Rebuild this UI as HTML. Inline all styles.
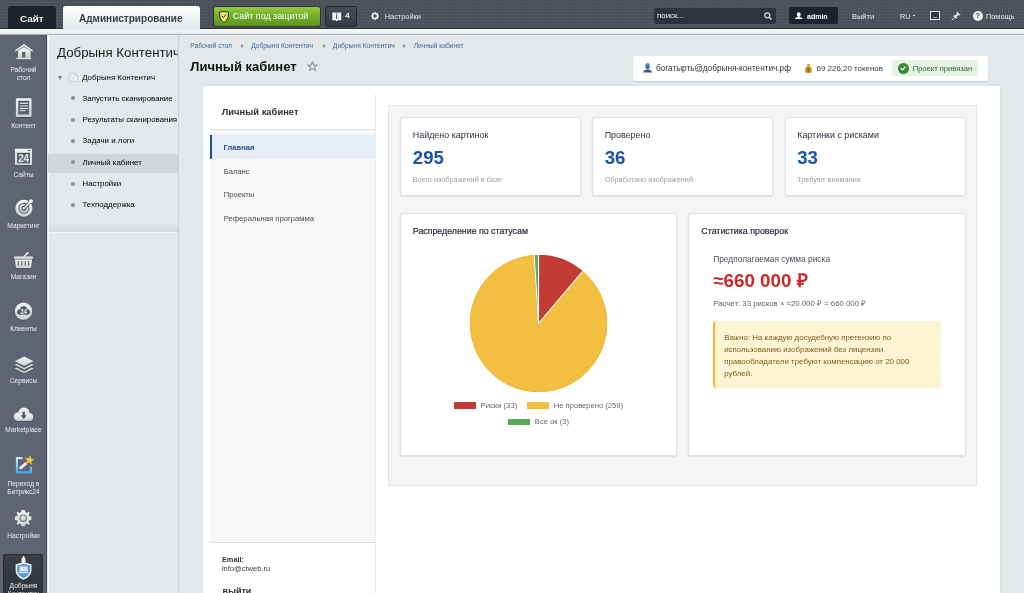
<!DOCTYPE html>
<html><head><meta charset="utf-8">
<style>
*{margin:0;padding:0;box-sizing:border-box}
html,body{width:1024px;height:593px;overflow:hidden}
body{position:relative;font-family:"Liberation Sans",sans-serif;background:#e3e9eb;color:#333}
.a{position:absolute;white-space:nowrap;line-height:1}
.b{font-weight:bold}
#topbar{position:absolute;left:0;top:0;width:1024px;height:29px;background:#4a4e57;
 background-image:linear-gradient(90deg,rgba(255,255,255,.03) 1px,transparent 1px),linear-gradient(0deg,rgba(255,255,255,.03) 1px,transparent 1px);background-size:3px 3px;border-bottom:1px solid #2f3238}
#strip{position:absolute;left:0;top:29px;width:1024px;height:6px;background:linear-gradient(#fbfcfc,#e3e7e9);border-bottom:1px solid #aeb2b5}
#side{position:absolute;left:0;top:35px;width:47px;height:558px;background:#5e6472;border-right:1px solid #474b55}
#col2{position:absolute;left:48px;top:35px;width:131px;height:558px;background:#e4e9eb;border-left:1.5px solid #f7f9fa;border-right:1px solid #cdd3d7}
.sl{color:#e9ebee;font-size:6.66px;text-align:center;width:47px;left:0;line-height:8.6px}
.mi{font-size:7.89px;color:#000;left:82.5px}
.bul{position:absolute;left:71px;width:4px;height:4px;background:#8a919b;border-radius:50%}
</style></head><body><div id="wrap" style="position:absolute;left:0;top:0;width:1024px;height:593px;will-change:transform">
<div id="topbar"></div>
<div id="strip"></div>

<!-- top tabs -->
<div class="a" style="left:8px;top:6px;width:48px;height:23px;background:#1f222b;border-radius:3px 3px 0 0"></div>
<div class="a b" style="left:20px;top:13.5px;font-size:9.9px;color:#f2f2f2">Сайт</div>
<div class="a" style="left:62.5px;top:6px;width:137px;height:24px;background:linear-gradient(#fcfcfd,#e4e8ea);border-radius:3px 3px 0 0"></div>
<div class="a b" style="left:79px;top:14.3px;font-size:10px;color:#3b3e44">Администрирование</div>

<!-- green button -->
<div class="a" style="left:214px;top:7px;width:106px;height:19px;background:linear-gradient(#95c93f,#74ad2c 50%,#5b951f);border-radius:2px;box-shadow:0 0 0 1px #2f3440"></div>
<svg class="a" style="left:219px;top:10.5px" width="10" height="12" viewBox="0 0 10 12"><defs><linearGradient id="shg" x1="0" y1="0" x2="0" y2="1"><stop offset="0" stop-color="#e9f27a"/><stop offset="1" stop-color="#f3f65a"/></linearGradient></defs><path d="M0.5 1.2 Q5 -0.2 9.5 1.2 L9.2 6 Q8.8 9 5 11.5 Q1.2 9 0.8 6Z" fill="url(#shg)" stroke="#15170f" stroke-width="0.9" stroke-linejoin="round"/><path d="M2.6 4.9 L4.3 6.4 L7.1 3.6" stroke="#1a1c12" stroke-width="1" fill="none"/></svg>
<div class="a" style="left:232.8px;top:12.1px;font-size:8.92px;color:#fff">Сайт под защитой</div>

<!-- notif -->
<div class="a" style="left:325.5px;top:6.5px;width:30.7px;height:19px;background:linear-gradient(#474c59,#363a45);border-radius:2px;box-shadow:0 0 0 1px #24272e"></div>
<svg class="a" style="left:331.5px;top:11.5px" width="10" height="10" viewBox="0 0 10 10"><path d="M0.3 0.5 H9.2 V8.3 H5.6 L4.7 9.5 L3.8 8.3 H0.3Z" fill="#f2f3f4"/><rect x="4.2" y="2.6" width="1" height="4.4" fill="#3a3e48"/><rect x="4.2" y="1.2" width="1" height="0.9" fill="#3a3e48"/></svg>
<div class="a b" style="left:345.2px;top:12.2px;font-size:7.8px;color:#fff">4</div>

<!-- settings -->
<svg class="a" style="left:370.9px;top:12.1px" width="8" height="8" viewBox="0 0 10 10"><g fill="#eee"><circle cx="5" cy="5" r="3.9"/><rect x="4.1" y="0" width="1.8" height="10"/><rect x="0" y="4.1" width="10" height="1.8"/><rect x="4.1" y="0" width="1.8" height="10" transform="rotate(45 5 5)"/><rect x="4.1" y="0" width="1.8" height="10" transform="rotate(-45 5 5)"/></g><circle cx="5" cy="5" r="2.1" fill="#4a4e57"/></svg>
<div class="a" style="left:384.7px;top:13px;font-size:7.4px;color:#e6e8ea">Настройки</div>

<!-- search -->
<div class="a" style="left:654px;top:8px;width:122px;height:15.5px;background:#2f323a;border-radius:2px;box-shadow:0 1px 0 rgba(255,255,255,.08)"></div>
<div class="a" style="left:657px;top:12.1px;font-size:7.9px;color:#f0f0f0">поиск...</div>
<svg class="a" style="left:764px;top:11.5px" width="8" height="8" viewBox="0 0 8 8"><circle cx="3.3" cy="3.3" r="2.5" stroke="#ddd" stroke-width="1.2" fill="none"/><path d="M5.2 5.2 L7.5 7.5" stroke="#ddd" stroke-width="1.4"/></svg>

<!-- admin -->
<div class="a" style="left:788.5px;top:7px;width:49.5px;height:17px;background:#1f222b;border-radius:2px"></div>
<svg class="a" style="left:795px;top:11.5px" width="7.5" height="7.5" viewBox="0 0 8 8"><path d="M4 0.3 C5.3 0.3 6 1.2 6 2.6 C6 3.8 5.4 4.6 4.8 4.9 V5.3 C6.5 5.6 7.8 6.2 7.8 7 V8 H0.2 V7 C0.2 6.2 1.5 5.6 3.2 5.3 V4.9 C2.6 4.6 2 3.8 2 2.6 C2 1.2 2.7 0.3 4 0.3Z" fill="#fff"/></svg>
<div class="a b" style="left:807px;top:12.8px;font-size:7.03px;color:#fff">admin</div>
<div class="a" style="left:852px;top:13.2px;font-size:7.46px;color:#e6e8ea">Выйти</div>
<div class="a" style="left:900px;top:12.6px;font-size:7.27px;color:#e6e8ea">RU</div>
<div class="a" style="left:912.5px;top:15px;width:2.5px;height:1px;background:#ddd"></div>
<div class="a" style="left:930px;top:11px;width:9.5px;height:9px;border:1.3px solid #e5e5e5;background:#353840"></div>
<div class="a" style="left:932.5px;top:16.5px;width:4.5px;height:1px;background:#999"></div>
<svg class="a" style="left:951px;top:11px" width="10" height="10" viewBox="0 0 10 10"><path d="M6 0.5 L9.5 4 L8.5 4.5 L7.5 4 L5.5 6 L5.8 7.5 L5 8 L2 5 L2.5 4.2 L4 4.5 L6 2.5 L5.5 1.5Z" fill="#e5e5e5"/><path d="M3.2 6.8 L0.8 9.2" stroke="#e5e5e5" stroke-width="1"/></svg>
<div class="a" style="left:972.6px;top:10.6px;width:10.6px;height:10.6px;border-radius:50%;background:#eee"></div>
<div class="a b" style="left:975.3px;top:12.2px;font-size:8px;color:#4a4e57">?</div>
<div class="a" style="left:986px;top:12.8px;font-size:7.35px;color:#e6e8ea">Помощь</div>

<!-- left sidebar -->
<div id="side"></div>
<div id="col2"></div>

<div class="a" style="left:3px;top:554px;width:40px;height:39px;background:linear-gradient(#3b3f48,#30333a);border-radius:2px;box-shadow:inset 0 0 0 1px #2a2d33"></div>
<svg class="a" style="left:0;top:0" width="47" height="593" viewBox="0 0 47 593">
<defs>
<filter id="sh" x="-30%" y="-30%" width="160%" height="160%"><feDropShadow dx="0" dy="0.4" stdDeviation="0.6" flood-color="#000" flood-opacity="0.55"/></filter>
<linearGradient id="ig" x1="0" y1="0" x2="0" y2="1"><stop offset="0" stop-color="#f4f5f6"/><stop offset="1" stop-color="#cfd1d4"/></linearGradient>
<linearGradient id="bl" x1="0" y1="0" x2="0" y2="1"><stop offset="0" stop-color="#d4f3ff"/><stop offset="1" stop-color="#3fa9ee"/></linearGradient>
</defs>
<g filter="url(#sh)" fill="url(#ig)">
 <!-- house -->
 <path d="M15.3 50 L24 44 L32.7 50 L32.7 51.9 L24 46.1 L15.3 51.9Z"/>
 <path d="M18 50.6 L24 46.9 L30.6 50.6 V57.8 H25.3 V52 H22 V57.8 H18Z"/>
 <rect x="16.5" y="57.7" width="14.6" height="1.5"/>
 <!-- document -->
 <path fill-rule="evenodd" d="M17.2 98.2 H30.2 Q31.5 98.2 31.5 99.5 V115.7 Q31.5 117 30.2 117 H17.2 Q15.9 117 15.9 115.7 V99.5 Q15.9 98.2 17.2 98.2Z M18.2 100.8 V114.6 H29.2 V100.8Z"/>
 <rect x="19.9" y="102.8" width="8.1" height="1.2"/>
 <rect x="19.9" y="105.2" width="8.1" height="1.2" opacity="0.75"/>
 <rect x="19.9" y="107.9" width="8.1" height="1.2"/>
 <rect x="19.9" y="110.1" width="5.5" height="1.2" opacity="0.8"/>
 <!-- sites window -->
 <path fill-rule="evenodd" d="M15 148.8 H32 V165 H15Z M17 152.8 V163.3 H30 V152.8Z"/>
 <!-- target -->
 <path fill-rule="evenodd" d="M23.9 199.8 A8.5 8.5 0 1 0 23.9 216.8 A8.5 8.5 0 1 0 23.9 199.8Z M23.9 202.8 A5.5 5.5 0 1 1 23.9 213.8 A5.5 5.5 0 1 1 23.9 202.8Z"/>
 <path fill-rule="evenodd" d="M23.9 203.9 A4.4 4.4 0 1 0 23.9 212.7 A4.4 4.4 0 1 0 23.9 203.9Z M23.9 205.6 A2.7 2.7 0 1 1 23.9 211 A2.7 2.7 0 1 1 23.9 205.6Z"/>
 <circle cx="23.9" cy="208.3" r="1.4"/>
</g>
<path d="M24.6 207.6 L32.5 199.7" stroke="#5e6472" stroke-width="3.2"/>
<g filter="url(#sh)" fill="url(#ig)">
 <path d="M23.5 208 L24.5 209 L30.2 203.3 L32.2 203 L33 200.5 L31.8 199.3 L29.3 200.1 L29 202.1Z"/>
 <!-- basket -->
 <rect x="13.9" y="256.4" width="19.2" height="2.3" rx="1"/>
 <path d="M22.6 256.8 L27.8 251.8 L29 252.9 L24.6 257Z"/>
 <path fill-rule="evenodd" d="M14.9 259.6 H32.1 L30.9 268 H16.1Z M17.7 261 V265.8 H18.9 V261Z M21.3 261 V265.8 H22.5 V261Z M24.7 261 V265.8 H25.9 V261Z M28 261 V265.8 H29.2 V261Z"/>
 <!-- clients -->
 <circle cx="23.5" cy="311.2" r="8.6"/>
 <!-- layers -->
 <path d="M24.2 356.5 L33.5 361.3 L24.2 366 L14.9 361.3Z"/>
 <path d="M14.9 364.8 L16.5 364 L24.2 367.9 L31.9 364 L33.5 364.8 L24.2 369.5Z"/>
 <path d="M14.9 368.6 L16.5 367.8 L24.2 371.7 L31.9 367.8 L33.5 368.6 L24.2 373.3Z"/>
 <!-- cloud -->
 <circle cx="17.9" cy="416.6" r="4.2"/><circle cx="23.9" cy="413" r="5.5"/><circle cx="29.2" cy="416.9" r="3.9"/><rect x="17.9" y="414" width="11.3" height="6.8"/>
 <!-- gear -->
 <path fill-rule="evenodd" d="M23.2 510 L25 510.2 L25.3 512.2 L27 513 L28.6 511.7 L29.9 513 L28.6 514.6 L29.3 516.3 L31.3 516.6 L31.5 518.4 L31.3 520 L29.3 520.3 L28.6 522 L29.9 523.6 L28.6 524.9 L27 523.6 L25.3 524.4 L25 526.2 H21.4 L21.1 524.4 L19.4 523.6 L17.8 524.9 L16.5 523.6 L17.8 522 L17.1 520.3 L15.1 520 L14.9 518.4 L15.1 516.6 L17.1 516.3 L17.8 514.6 L16.5 513 L17.8 511.7 L19.4 513 L21.1 512.2 L21.4 510.2Z M23.2 514.5 A3.7 3.7 0 1 0 23.2 521.9 A3.7 3.7 0 1 0 23.2 514.5Z"/>
 <circle cx="23.2" cy="518.2" r="2.6"/>
</g>
<!-- sites 24 -->
<text x="23.6" y="162.2" font-family="Liberation Sans" font-weight="bold" font-size="10" text-anchor="middle" fill="#e8e9eb" letter-spacing="-0.3">24</text>
<rect x="27.8" y="150" width="2.5" height="1" fill="#4a4e57"/>
<g fill="#51565f"><circle cx="19.9" cy="312" r="2.7"/><circle cx="23.6" cy="309.6" r="3.4"/><circle cx="27.2" cy="311.9" r="2.7"/><rect x="19.9" y="310" width="7.3" height="4.6"/></g><text x="23.6" y="314" font-family="Liberation Sans" font-weight="bold" font-size="6.3" text-anchor="middle" fill="#eceef0" letter-spacing="-0.2">24</text>
<path d="M22.6 411.8 H24.8 V415.2 H26.9 L23.7 418.9 L20.5 415.2 H22.6Z" fill="#50545c"/>
<!-- bitrix24 -->
<path d="M15.9 457 H22.5 V459.2 H18 V471.2 H29.8 V466.8 H32 V473.4 H15.9Z" fill="url(#bl)"/>
<path d="M18.8 467.6 L25.5 461.9 L27.4 464.1 L20.7 469.8Z" fill="#f6f6f6"/>
<defs><linearGradient id="st" x1="0" y1="0" x2="0" y2="1"><stop offset="0" stop-color="#fbe37a"/><stop offset="1" stop-color="#e7a81e"/></linearGradient></defs><path d="M30.37 455.38 L31.08 458.77 L34.45 459.60 L31.44 461.33 L31.69 464.79 L29.12 462.47 L25.90 463.77 L27.32 460.61 L25.09 457.95 L28.54 458.32Z" fill="url(#st)" stroke="#e0a020" stroke-width="0.3" stroke-linejoin="round"/>
<!-- shield -->
<path d="M23.6 555.8 C25.5 558 26 560 25.2 562.5 L31.5 564.5 V570 C31.5 575 28 578 23.6 579.7 C19.2 578 15.6 575 15.6 570 V564.5 L21.9 562.5 C21 560 21.5 558 23.6 555.8Z" fill="#f5f6f8"/>
<path d="M17 565.5 L23.6 563.8 L30.2 565.5 V570 C30.2 574 27.5 576.5 23.6 578 C19.7 576.5 17 574 17 570Z" fill="#5c9ad8"/>
<rect x="19.6" y="566.5" width="8" height="5" fill="#dfe8f2"/>
<rect x="18.3" y="572.3" width="10.6" height="0.9" fill="#f5f6f8"/>
</svg>

<div class="a sl" style="top:65.9px">Рабочий<br>стол</div>
<div class="a sl" style="top:121.6px">Контент</div>
<div class="a sl" style="top:170.9px">Сайты</div>
<div class="a sl" style="top:222px">Маркетинг</div>
<div class="a sl" style="top:272.6px">Магазин</div>
<div class="a sl" style="top:324.6px">Клиенты</div>
<div class="a sl" style="top:377.3px">Сервисы</div>
<div class="a sl" style="top:425.7px">Marketplace</div>
<div class="a sl" style="top:479.6px">Переход в<br>Битрикс24</div>
<div class="a sl" style="top:531.7px">Настройки</div>
<div class="a sl" style="top:581.9px">Добрыня<br>Контентич</div>

<!-- col2 -->
<div class="a" style="left:57px;top:45.6px;font-size:13.3px;color:#1c1c1c;width:121px;overflow:hidden">Добрыня Контентич</div>
<div class="a" style="left:58.1px;top:75.8px;width:0;height:0;border-left:2.6px solid transparent;border-right:2.6px solid transparent;border-top:4px solid #717985"></div>
<svg class="a" style="left:69px;top:72.7px" width="9" height="9" viewBox="0 0 9 9"><path d="M0.6 0.6 H6 L8.4 3 V8.4 H0.6Z" fill="#f6f6f6" stroke="#c3c6ca" stroke-width="0.8"/><path d="M6 0.6 V3 H8.4" fill="#e2e2e2" stroke="#c3c6ca" stroke-width="0.6"/><rect x="2.2" y="3" width="3.5" height="3.5" fill="#e3e3e3"/></svg>
<div class="a mi" style="left:82.2px;top:73.8px">Добрыня Контентич</div>
<div class="a" style="left:48px;top:153.5px;width:130px;height:19px;background:#d2d7da"></div>
<div class="bul" style="top:96.3px"></div><div class="a mi" style="top:94.7px">Запустить сканирование</div>
<div class="bul" style="top:117.7px"></div><div class="a mi" style="top:116.1px">Результаты сканирования</div>
<div class="bul" style="top:139px"></div><div class="a mi" style="top:137.4px">Задачи и логи</div>
<div class="bul" style="top:160.3px"></div><div class="a mi" style="top:158.7px">Личный кабинет</div>
<div class="bul" style="top:181.6px"></div><div class="a mi" style="top:180.0px">Настройки</div>
<div class="bul" style="top:203px"></div><div class="a mi" style="top:201.4px">Техподдержка</div>
<div class="a" style="left:49px;top:223px;width:129px;height:8px;background:linear-gradient(rgba(60,80,100,0),rgba(60,80,100,.09))"></div>
<div class="a" style="left:48px;top:231px;width:130px;height:1px;background:#d3d9dd"></div><div class="a" style="left:48px;top:232px;width:130px;height:1px;background:#f2f5f6"></div>

<!-- breadcrumbs -->
<div class="a" style="left:190.3px;top:42.6px;font-size:6.65px;color:#4466a6">Рабочий стол</div>
<div class="a" style="left:241.3px;top:43.5px;border-left:3px solid #8c8f93;border-top:2.5px solid transparent;border-bottom:2.5px solid transparent"></div>
<div class="a" style="left:251.2px;top:42.6px;font-size:6.7px;color:#4466a6">Добрыня Контентич</div>
<div class="a" style="left:322.5px;top:43.5px;border-left:3px solid #8c8f93;border-top:2.5px solid transparent;border-bottom:2.5px solid transparent"></div>
<div class="a" style="left:332.8px;top:42.6px;font-size:6.7px;color:#4466a6">Добрыня Контентич</div>
<div class="a" style="left:402.8px;top:43.5px;border-left:3px solid #8c8f93;border-top:2.5px solid transparent;border-bottom:2.5px solid transparent"></div>
<div class="a" style="left:413.7px;top:42.6px;font-size:6.65px;color:#4466a6">Личный кабинет</div>

<div class="a b" style="left:190.3px;top:60px;font-size:13px;color:#111">Личный кабинет</div>
<svg class="a" style="left:307px;top:61px" width="11" height="11" viewBox="0 0 11 11"><path d="M5.5 0.8 L6.8 4 L10.2 4.1 L7.5 6.2 L8.5 9.6 L5.5 7.6 L2.5 9.6 L3.5 6.2 L0.8 4.1 L4.2 4Z" fill="none" stroke="#8d949d" stroke-width="1.1" stroke-linejoin="round"/></svg>

<!-- info box -->
<div class="a" style="left:633px;top:56px;width:355px;height:25px;background:#fff;border-radius:3px;box-shadow:0 1px 1px rgba(0,0,0,.12)"></div>
<svg class="a" style="left:643px;top:63px" width="10" height="10" viewBox="0 0 10 10"><defs><linearGradient id="ug" x1="0" y1="0" x2="0" y2="1"><stop offset="0" stop-color="#7b9ccc"/><stop offset="1" stop-color="#2c5590"/></linearGradient></defs><ellipse cx="4.6" cy="3" rx="2.3" ry="3" fill="url(#ug)"/><path d="M0.2 9.6 C0.3 8 1.5 7 3.5 6.5 H5.7 C7.7 7 8.9 8 9 9.6Z" fill="#2f5993"/></svg>
<div class="a" style="left:655.9px;top:65.1px;font-size:8.22px;color:#333">богатырть@добрыня-контентич.рф</div>
<svg class="a" style="left:804.5px;top:63.5px" width="7" height="9" viewBox="0 0 7 9"><path d="M2 0 H5 L4.5 2 C6.5 3 7 5 7 7 C7 8.5 6 9 3.5 9 C1 9 0 8.5 0 7 C0 5 0.5 3 2.5 2Z" fill="#d39b2a"/><text x="3.5" y="7.6" font-size="5" text-anchor="middle" fill="#5a3d00" font-family="Liberation Sans">$</text></svg>
<div class="a" style="left:816.6px;top:65px;font-size:7.93px;color:#3a404a">69 226,20 токенов</div>
<div class="a" style="left:892.4px;top:60px;width:85.6px;height:15.6px;background:#e6f2e4;border-radius:2px"></div>
<div class="a" style="left:898.4px;top:63.3px;width:10.3px;height:10.3px;background:#3b8a3f;border-radius:50%"></div>
<svg class="a" style="left:898.4px;top:63.3px" width="10.2" height="10.2" viewBox="0 0 10 10"><path d="M2.8 5.2 L4.4 6.8 L7.3 3.6" stroke="#fff" stroke-width="1.2" fill="none"/></svg>
<div class="a" style="left:912.7px;top:64.9px;font-size:7.59px;color:#2a6a2f">Проект привязан</div>

<!-- white panel -->
<div class="a" style="left:203px;top:86px;width:797px;height:507px;background:#fff;box-shadow:0 0 1.5px rgba(40,60,70,.12)"></div>
<!-- inner sidebar -->
<div class="a" style="left:210px;top:93.5px;width:166px;height:500px;background:#fff;border-right:1.5px solid #eceeed"></div>
<div class="a" style="left:210px;top:130px;width:165px;height:412.5px;background:#f7f7f7"></div>
<div class="a" style="left:210px;top:129px;width:165px;height:1px;background:#e1e1e1"></div>
<div class="a" style="left:210px;top:542px;width:165px;height:1px;background:#dedede"></div>
<div class="a b" style="left:221.7px;top:106.8px;font-size:9.42px;color:#333">Личный кабинет</div>
<div class="a" style="left:210px;top:135px;width:165px;height:23.5px;background:#e7eef7;border-left:2px solid #1f4d9b"></div>
<div class="a b" style="left:223.6px;top:144px;font-size:7.57px;color:#1f4d9b">Главная</div>
<div class="a" style="left:223.7px;top:167.5px;font-size:7.64px;color:#474c55">Баланс</div>
<div class="a" style="left:223.7px;top:191px;font-size:7.64px;color:#474c55">Проекты</div>
<div class="a" style="left:223.7px;top:215.2px;font-size:7.69px;color:#474c55">Реферальная программа</div>
<div class="a b" style="left:221.9px;top:556px;font-size:7.4px;color:#333">Email:</div>
<div class="a" style="left:221.9px;top:564.6px;font-size:7.54px;color:#3d3d3d">info@ctweb.ru</div>
<div class="a b" style="left:222.6px;top:587px;font-size:9.05px;color:#333">выйти</div>

<!-- stats container -->
<div class="a" style="left:388px;top:105px;width:589px;height:381px;background:#f4f6f6;border:1px solid #e2e6e8"></div>
<div class="a card" style="left:400px;top:117px;width:181px;height:79px;background:#fff;border:1px solid #dfe2e4;border-radius:2.5px;box-shadow:0 1px 1.5px rgba(0,0,0,.07),0 0 3px rgba(120,160,190,.08)"></div>
<div class="a card" style="left:592px;top:117px;width:181px;height:79px;background:#fff;border:1px solid #dfe2e4;border-radius:2.5px;box-shadow:0 1px 1.5px rgba(0,0,0,.07),0 0 3px rgba(120,160,190,.08)"></div>
<div class="a card" style="left:785px;top:117px;width:181px;height:79px;background:#fff;border:1px solid #dfe2e4;border-radius:2.5px;box-shadow:0 1px 1.5px rgba(0,0,0,.07),0 0 3px rgba(120,160,190,.08)"></div>

<div class="a" style="left:412.8px;top:131.3px;font-size:8.92px;color:#2b3240">Найдено картинок</div>
<div class="a b" style="left:412.8px;top:148.6px;font-size:18.64px;color:#1d51a3">295</div>
<div class="a" style="left:412.8px;top:176.3px;font-size:7.31px;color:#9aa0a8">Всего изображений в базе</div>

<div class="a" style="left:604.7px;top:131.3px;font-size:8.92px;color:#2b3240">Проверено</div>
<div class="a b" style="left:604.7px;top:148.6px;font-size:18.64px;color:#1d51a3">36</div>
<div class="a" style="left:604.7px;top:176.3px;font-size:7.31px;color:#9aa0a8">Обработано изображений</div>

<div class="a" style="left:797.2px;top:131.3px;font-size:8.92px;color:#2b3240">Картинки с рисками</div>
<div class="a b" style="left:797.2px;top:148.6px;font-size:18.64px;color:#1d51a3">33</div>
<div class="a" style="left:797.2px;top:176.3px;font-size:7.31px;color:#9aa0a8">Требуют внимания</div>

<div class="a" style="left:400px;top:213px;width:277px;height:243px;background:#fff;border:1px solid #dfe2e4;border-radius:2.5px;box-shadow:0 1px 1.5px rgba(0,0,0,.07),0 0 3px rgba(120,160,190,.08)"></div>
<div class="a" style="left:688px;top:213px;width:278px;height:243px;background:#fff;border:1px solid #dfe2e4;border-radius:2.5px;box-shadow:0 1px 1.5px rgba(0,0,0,.07),0 0 3px rgba(120,160,190,.08)"></div>

<div class="a" style="left:412.8px;top:227.1px;font-size:8.82px;color:#222937;-webkit-text-stroke:0.18px #222937">Распределение по статусам</div>
<svg class="a" style="left:469.7px;top:254.9px" width="137" height="137" viewBox="-68.5 -68.5 137 137">
 <path d="M0 0 L0.00 -68.30 A68.3 68.3 0 0 1 44.15 -52.11 Z" fill="#c23c35" stroke="#b3302b" stroke-width="1"/>
 <path d="M0 0 L44.15 -52.11 A68.3 68.3 0 1 1 -4.36 -68.16 Z" fill="#f3bf40" stroke="#f0b52e" stroke-width="1"/>
 <path d="M0 0 L-4.36 -68.16 A68.3 68.3 0 0 1 0.00 -68.30 Z" fill="#5fa95d" stroke="#449845" stroke-width="1"/>
 <g stroke="#fff" stroke-width="1.1"><path d="M0 0 L0.00 -69.67"/><path d="M0 0 L45.03 -53.15"/><path d="M0 0 L-4.45 -69.52"/></g>
</svg>
<div class="a" style="left:453.8px;top:402px;width:22px;height:6.5px;background:#c23b35"></div>
<div class="a" style="left:480.5px;top:401.5px;font-size:7.7px;color:#666">Риски (33)</div>
<div class="a" style="left:527px;top:402px;width:22px;height:6.5px;background:#f2be42"></div>
<div class="a" style="left:553.8px;top:401.5px;font-size:7.6px;color:#666">Не проверено (259)</div>
<div class="a" style="left:508px;top:418.7px;width:22.3px;height:6.5px;background:#5aa95a"></div>
<div class="a" style="left:534.8px;top:418.2px;font-size:7.65px;color:#666">Все ок (3)</div>

<div class="a" style="left:701.3px;top:227.1px;font-size:8.85px;color:#222937;-webkit-text-stroke:0.18px #222937">Статистика проверок</div>
<div class="a" style="left:713.2px;top:254.5px;font-size:8.4px;color:#4a4f57">Предполагаемая сумма риска</div>
<div class="a b" style="left:713.2px;top:271.9px;font-size:18.8px;color:#c62828">≈660 000 ₽</div>
<div class="a" style="left:713.2px;top:299.5px;font-size:7.8px;color:#5a5f66">Расчет: 33 рисков × ≈20 000 ₽ = 660 000 ₽</div>
<div class="a" style="left:713.2px;top:321px;width:227.5px;height:66.7px;background:#fcf4d2;border-left:2.5px solid #f0b838;border-radius:3px"></div>
<div class="a" style="left:724.2px;top:332px;font-size:7.91px;color:#7d5f1a;line-height:12.15px">Важно: На каждую досудебную претензию по<br>использованию изображений без лицензии<br>правообладатели требуют компенсацию от 20 000<br>рублей.</div>

</div></body></html>
